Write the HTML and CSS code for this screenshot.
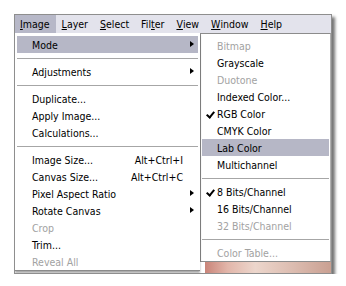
FILE: index.html
```html
<!DOCTYPE html>
<html lang="en">
<head>
    <meta charset="UTF-8">
    <title>Image Menu - Mode</title>
    <link rel="stylesheet" href="styles.css">
</head>
<body>

<div class="window">
    <div class="menubar">
        <span class="top-item active"><u>I</u>mage</span>
        <span class="top-item"><u>L</u>ayer</span>
        <span class="top-item"><u>S</u>elect</span>
        <span class="top-item">Fil<u>t</u>er</span>
        <span class="top-item"><u>V</u>iew</span>
        <span class="top-item"><u>W</u>indow</span>
        <span class="top-item"><u>H</u>elp</span>
    </div>

    <div class="work">
        <div class="menu">
            <div class="item hover">Mode<span class="arrow"></span></div>
            <div class="sep"></div>
            <div class="item">Adjustments<span class="arrow"></span></div>
            <div class="sep"></div>
            <div class="item">Duplicate...</div>
            <div class="item">Apply Image...</div>
            <div class="item">Calculations...</div>
            <div class="sep"></div>
            <div class="item">Image Size...<span class="key">Alt+Ctrl+I</span></div>
            <div class="item">Canvas Size...<span class="key">Alt+Ctrl+C</span></div>
            <div class="item">Pixel Aspect Ratio<span class="arrow"></span></div>
            <div class="item">Rotate Canvas<span class="arrow"></span></div>
            <div class="item disabled">Crop</div>
            <div class="item">Trim...</div>
            <div class="item disabled">Reveal All</div>
        </div>

        <div class="side">
            <div class="submenu">
                <div class="item disabled">Bitmap</div>
                <div class="item">Grayscale</div>
                <div class="item disabled">Duotone</div>
                <div class="item">Indexed Color...</div>
                <div class="item checked">RGB Color</div>
                <div class="item">CMYK Color</div>
                <div class="item hover">Lab Color</div>
                <div class="item">Multichannel</div>
                <div class="sep"></div>
                <div class="item checked">8 Bits/Channel</div>
                <div class="item">16 Bits/Channel</div>
                <div class="item disabled">32 Bits/Channel</div>
                <div class="sep"></div>
                <div class="item disabled">Color Table...</div>
            </div>
            <div class="canvas"></div>
        </div>
    </div>
</div>

</body>
</html>
```

FILE: styles.css
```css
body {
    margin: 0;
    background-color: #fff;
    font-family: "DejaVu Sans Condensed", "DejaVu Sans", sans-serif;
    font-stretch: condensed;
    font-size: 10.5px;
    color: #000;
}
.window {
    margin: 14px 0 0 14px;
    width: 316px;
    height: 258px;
    border: 1px solid #8e8e8e;
    background-color: #fff;
    box-shadow: 3px 3px 3px rgba(0, 0, 0, 0.55);
    display: flex;
    flex-direction: column;
    overflow: hidden;
}
.menubar {
    height: 18px;
    display: flex;
    align-items: stretch;
    background-color: #e3e3ec;
}
.top-item {
    display: flex;
    align-items: center;
    padding: 0 6px 0 5px;
    margin-right: 1px;
}
.top-item.active {
    background-color: #b7b8c8;
}
.work {
    flex: 1;
    display: flex;
}
.menu {
    width: 185px;
    height: 234px;
    padding-top: 3px;
    border-bottom: 1px solid #8a8a8a;
    box-shadow: 0 2px 2px rgba(0, 0, 0, 0.35);
    position: relative;
}
.item {
    height: 17px;
    display: flex;
    align-items: center;
    padding-left: 15px;
    margin: 0 2px;
    position: relative;
}
.item.hover {
    background-color: #b6b7c6;
}
.item.disabled {
    color: #a2a2a2;
}
.sep {
    height: 10px;
    display: flex;
    align-items: center;
    margin: 0 2px;
}
.sep::before {
    content: "";
    flex: 1;
    border-top: 1px solid #a6a6a6;
}
.menu .sep:nth-child(2) {
    height: 10px;
}
.arrow {
    position: absolute;
    right: 4px;
    top: 5px;
    width: 0;
    height: 0;
    border-top: 3.5px solid transparent;
    border-bottom: 3.5px solid transparent;
    border-left: 4px solid #000;
}
.key {
    position: absolute;
    right: 15px;
}
.side {
    flex: 1;
    display: flex;
    flex-direction: column;
}
.submenu {
    height: 224px;
    padding-top: 3px;
    border: 1px solid #8c8c8c;
    border-right-color: #b0b0b0;
    background-color: #fff;
}
.submenu .item {
    padding-left: 15px;
    margin: 0 1px;
}
.submenu .sep {
    margin: 0 1px;
}
.submenu .item.checked::before {
    content: "";
    position: absolute;
    left: 6px;
    top: 5px;
    width: 3px;
    height: 6px;
    border-right: 2px solid #000;
    border-bottom: 2px solid #000;
    transform: rotate(40deg);
}
.canvas {
    flex: 1;
    margin-left: 5px;
    background: linear-gradient(90deg, #c98479 0%, #e2b6aa 18%, #ecd6cc 40%, #dcbcb0 70%, #c9a092 100%);
}
```
